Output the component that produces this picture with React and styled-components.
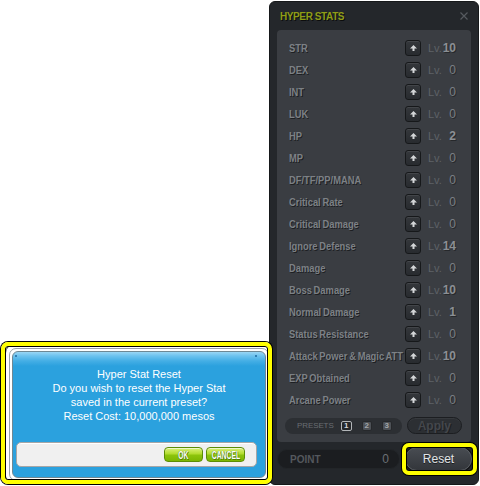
import React from 'react';
import styled, { createGlobalStyle } from 'styled-components';

const Global = createGlobalStyle`
  html, body { margin: 0; padding: 0; background: #ffffff; }
  body { width: 480px; height: 486px; overflow: hidden; font-family: "Liberation Sans", Arial, sans-serif; }
  * { box-sizing: border-box; }
`;

const Desktop = styled.div`
  position: relative;
  width: 480px;
  height: 486px;
  overflow: hidden;
  background: #ffffff;
`;

/* ---------- Hyper Stats window ---------- */
const StatWindow = styled.div`
  position: absolute;
  left: 269px;
  top: 1px;
  width: 210px;
  height: 484px;
  background: #24272b;
  border: 1px solid #16181a;
  border-radius: 6px;
  display: flex;
  flex-direction: column;
`;

const TitleBar = styled.div`
  height: 28px;
  display: flex;
  align-items: center;
  justify-content: space-between;
  padding: 0 10px 0 10px;
`;

const Title = styled.div`
  font-family: "Liberation Sans", Arial, sans-serif;
  font-weight: bold;
  font-size: 10px;
  letter-spacing: -0.4px;
  color: #8f9d18;
  text-shadow: 1px 1px 0 #0c0d0e;
`;

const CloseIcon = () => (
  <svg width="8" height="8" viewBox="0 0 8 8">
    <path d="M0.5 0.5 L7.5 7.5 M7.5 0.5 L0.5 7.5" stroke="#565a5f" strokeWidth="1.2" />
  </svg>
);

const Panel = styled.div`
  margin: 0 7px;
  height: 412px;
  background: #3a3d42;
  border-radius: 4px;
  padding: 7px 9px 8px 12px;
  display: flex;
  flex-direction: column;
`;

const Row = styled.div`
  height: 22px;
  display: flex;
  align-items: center;
`;

const Label = styled.div`
  flex: 1;
  min-width: 0;
  font-family: "Liberation Sans", Arial, sans-serif;
  font-weight: bold;
  font-size: 11px;
  word-spacing: -1px;
  color: #7d8186;
  text-shadow: 1px 1px 0 #1d1f22;
  white-space: nowrap;
  transform: scaleX(0.85);
  transform-origin: left center;
`;

const UpButton = styled.div`
  width: 16px;
  height: 16px;
  flex: none;
  border-radius: 3px;
  border: 1px solid #16181a;
  background: linear-gradient(#34373b, #282b2f);
  box-shadow: inset 0 1px 0 rgba(255, 255, 255, 0.08);
  display: flex;
  align-items: center;
  justify-content: center;
`;

const UpArrow = () => (
  <svg width="7" height="6" viewBox="0 0 7 6">
    <polygon points="3.5,0 7,3.5 4.5,3.5 4.5,6 2.5,6 2.5,3.5 0,3.5" fill="#d4d6d8" />
  </svg>
);

const Lv = styled.div`
  margin-left: 7px;
  width: 13px;
  font-size: 11px;
  color: #5e6267;
`;

const Value = styled.div`
  width: 15px;
  margin-right: 6px;
  text-align: right;
  font-size: 12px;
  font-weight: ${(p) => (p.$bold ? 'bold' : 'normal')};
  color: ${(p) => (p.$bold ? '#8b8f94' : '#7b7f84')};
  text-shadow: 1px 1px 0 #26282b;
`;

const PresetRow = styled.div`
  margin-top: 6px;
  height: 17px;
  display: flex;
  align-items: center;
  gap: 5px;
`;

const PresetPill = styled.div`
  flex: 1;
  margin-left: -4px;
  height: 16px;
  border-radius: 8px;
  background: #2c2f33;
  display: flex;
  align-items: center;
  padding-left: 12px;
`;

const PresetLabel = styled.span`
  font-size: 8px;
  letter-spacing: -0.1px;
  color: #696d72;
  margin-right: 7px;
`;

const PresetBox = styled.span`
  width: ${(p) => (p.$active ? '11px' : '10px')};
  height: 10px;
  margin-right: 10px;
  border-radius: 2px;
  display: flex;
  align-items: center;
  justify-content: center;
  font-size: 8px;
  font-weight: bold;
  border: 1px solid ${(p) => (p.$active ? '#b3b6b9' : '#26282b')};
  background: ${(p) => (p.$active ? '#25282b' : '#4d5156')};
  color: ${(p) => (p.$active ? '#d2d5d8' : '#a3a6aa')};
`;

const ApplyButton = styled.div`
  width: 56px;
  height: 17px;
  border-radius: 9px;
  background: #2c2f33;
  border: 1px solid #1c1e21;
  box-shadow: inset 0 1px 0 rgba(255, 255, 255, 0.05);
  display: flex;
  align-items: center;
  justify-content: center;
  font-size: 12px;
  font-weight: bold;
  color: #44474c;
  text-shadow: 1px 1px 0 #1e2023;
`;

const BottomRow = styled.div`
  margin: 5px 6px 0 7px;
  height: 24px;
  display: flex;
  align-items: center;
  gap: 5px;
`;

const PointPill = styled.div`
  width: 123px;
  height: 20px;
  border-radius: 10px;
  background: #1b1d20;
  border: 1px solid #222528;
  display: flex;
  align-items: center;
  justify-content: space-between;
  padding: 0 10px 0 12px;
`;

const PointLabel = styled.span`
  font-size: 10px;
  font-weight: bold;
  color: #54585d;
`;

const PointValue = styled.span`
  font-size: 12px;
  color: #6c7075;
`;

const ResetButton = styled.div`
  position: relative;
  width: 67px;
  height: 24px;
  border-radius: 12px;
  border: 1px solid #5a5e63;
  box-shadow: 0 0 0 1px #101113;
  background: linear-gradient(#484c52, #33363b);
  display: flex;
  align-items: center;
  justify-content: center;
  font-size: 12px;
  color: #e2e5e7;
  text-shadow: 0 1px 0 #1a1c1f;
`;

const ButtonHighlight = styled.span`
  position: absolute;
  top: -5px;
  left: -4px;
  right: -6px;
  bottom: -5px;
  border: 4px solid #ffff00;
  border-radius: 7px;
  box-shadow: 0 0 0 1px #000000, inset 0 0 0 1px #000000;
  pointer-events: none;
`;

/* ---------- Notice dialog ---------- */
const Notice = styled.div`
  position: absolute;
  left: 5px;
  top: 344px;
  width: 268px;
  height: 141px;
  background: #ffffff;
  border: 1px solid #444;
  border-radius: 9px;
  padding: 3px;
  display: flex;
`;

const NoticeRing = styled.div`
  flex: 1;
  background: #ffffff;
  border: 1px solid #9ca4a9;
  border-radius: 7px;
  padding: 2px;
  display: flex;
`;

const NoticeBody = styled.div`
  position: relative;
  flex: 1;
  border: 1px solid #6f8894;
  border-radius: 6px;
  background: linear-gradient(180deg, #9ad6f4 0px, #6cc2ee 4px, #44aee5 9px, #2ba1de 14px, #2ba1de 100%);
  padding: 15px 8px 8px 3px;
  display: flex;
  flex-direction: column;

  &::before, &::after {
    content: '';
    position: absolute;
    top: 3px;
    width: 2px;
    height: 2px;
    border-radius: 1px;
    background: #1d6aa0;
  }
  &::before { left: 2px; }
  &::after { right: 8px; }
`;

const Message = styled.div`
  padding-left: 5px;
  text-align: center;
  font-family: "Liberation Sans", Arial, sans-serif;
  font-size: 11px;
  line-height: 14px;
  color: #ffffff;
`;

const ButtonBar = styled.div`
  margin-top: 19px;
  height: 25px;
  border-radius: 5px;
  background: #f0f0f0;
  border: 1px solid #a6a6a6;
  box-shadow: inset 0 1px 0 #ffffff;
  display: flex;
  align-items: center;
  justify-content: flex-end;
  gap: 3px;
  padding-right: 11px;
`;

const GreenButton = styled.div`
  width: 39px;
  height: 15px;
  border-radius: 4px;
  border: 1px solid #5c8d05;
  background: linear-gradient(#dcf27a 0%, #b2dc2e 45%, #8cc40c 55%, #7cb602 100%);
  box-shadow: inset 0 1px 0 rgba(255, 255, 255, 0.6);
  display: flex;
  align-items: center;
  justify-content: center;
`;

const GreenLabel = styled.span`
  display: inline-block;
  font-family: "Liberation Sans", Arial, sans-serif;
  font-weight: bold;
  font-size: 11px;
  color: #ffffff;
  transform: scaleX(0.62);
  text-shadow: 0 0 1px #3d6a00, 1px 1px 0 #4f7f00;
`;

const DialogHighlight = styled.div`
  position: absolute;
  left: 1px;
  top: 342px;
  width: 271px;
  height: 142px;
  border: 4px solid #ffff00;
  border-radius: 7px;
  box-shadow: 0 0 0 1px #000000, inset 0 0 0 1px #000000;
  pointer-events: none;
`;

const stats = [
  ['STR', 10],
  ['DEX', 0],
  ['INT', 0],
  ['LUK', 0],
  ['HP', 2],
  ['MP', 0],
  ['DF/TF/PP/MANA', 0],
  ['Critical Rate', 0],
  ['Critical Damage', 0],
  ['Ignore Defense', 14],
  ['Damage', 0],
  ['Boss Damage', 10],
  ['Normal Damage', 1],
  ['Status Resistance', 0],
  ['Attack Power & Magic ATT', 10],
  ['EXP Obtained', 0],
  ['Arcane Power', 0],
];

export default function App() {
  return (
    <Desktop>
      <Global />
      <StatWindow>
        <TitleBar>
          <Title>HYPER STATS</Title>
          <CloseIcon />
        </TitleBar>
        <Panel>
          {stats.map(([name, lv]) => (
            <Row key={name}>
              <Label>{name}</Label>
              <UpButton>
                <UpArrow />
              </UpButton>
              <Lv>Lv.</Lv>
              <Value $bold={lv !== 0}>{lv}</Value>
            </Row>
          ))}
          <PresetRow>
            <PresetPill>
              <PresetLabel>PRESETS</PresetLabel>
              <PresetBox $active>1</PresetBox>
              <PresetBox>2</PresetBox>
              <PresetBox>3</PresetBox>
            </PresetPill>
            <ApplyButton>Apply</ApplyButton>
          </PresetRow>
        </Panel>
        <BottomRow>
          <PointPill>
            <PointLabel>POINT</PointLabel>
            <PointValue>0</PointValue>
          </PointPill>
          <ResetButton>
            Reset
            <ButtonHighlight />
          </ResetButton>
        </BottomRow>
      </StatWindow>

      <Notice>
        <NoticeRing>
          <NoticeBody>
            <Message>
              Hyper Stat Reset
              <br />
              Do you wish to reset the Hyper Stat
              <br />
              saved in the current preset?
              <br />
              Reset Cost: 10,000,000 mesos
            </Message>
            <ButtonBar>
              <GreenButton>
                <GreenLabel>OK</GreenLabel>
              </GreenButton>
              <GreenButton>
                <GreenLabel>CANCEL</GreenLabel>
              </GreenButton>
            </ButtonBar>
          </NoticeBody>
        </NoticeRing>
      </Notice>
      <DialogHighlight />
    </Desktop>
  );
}
